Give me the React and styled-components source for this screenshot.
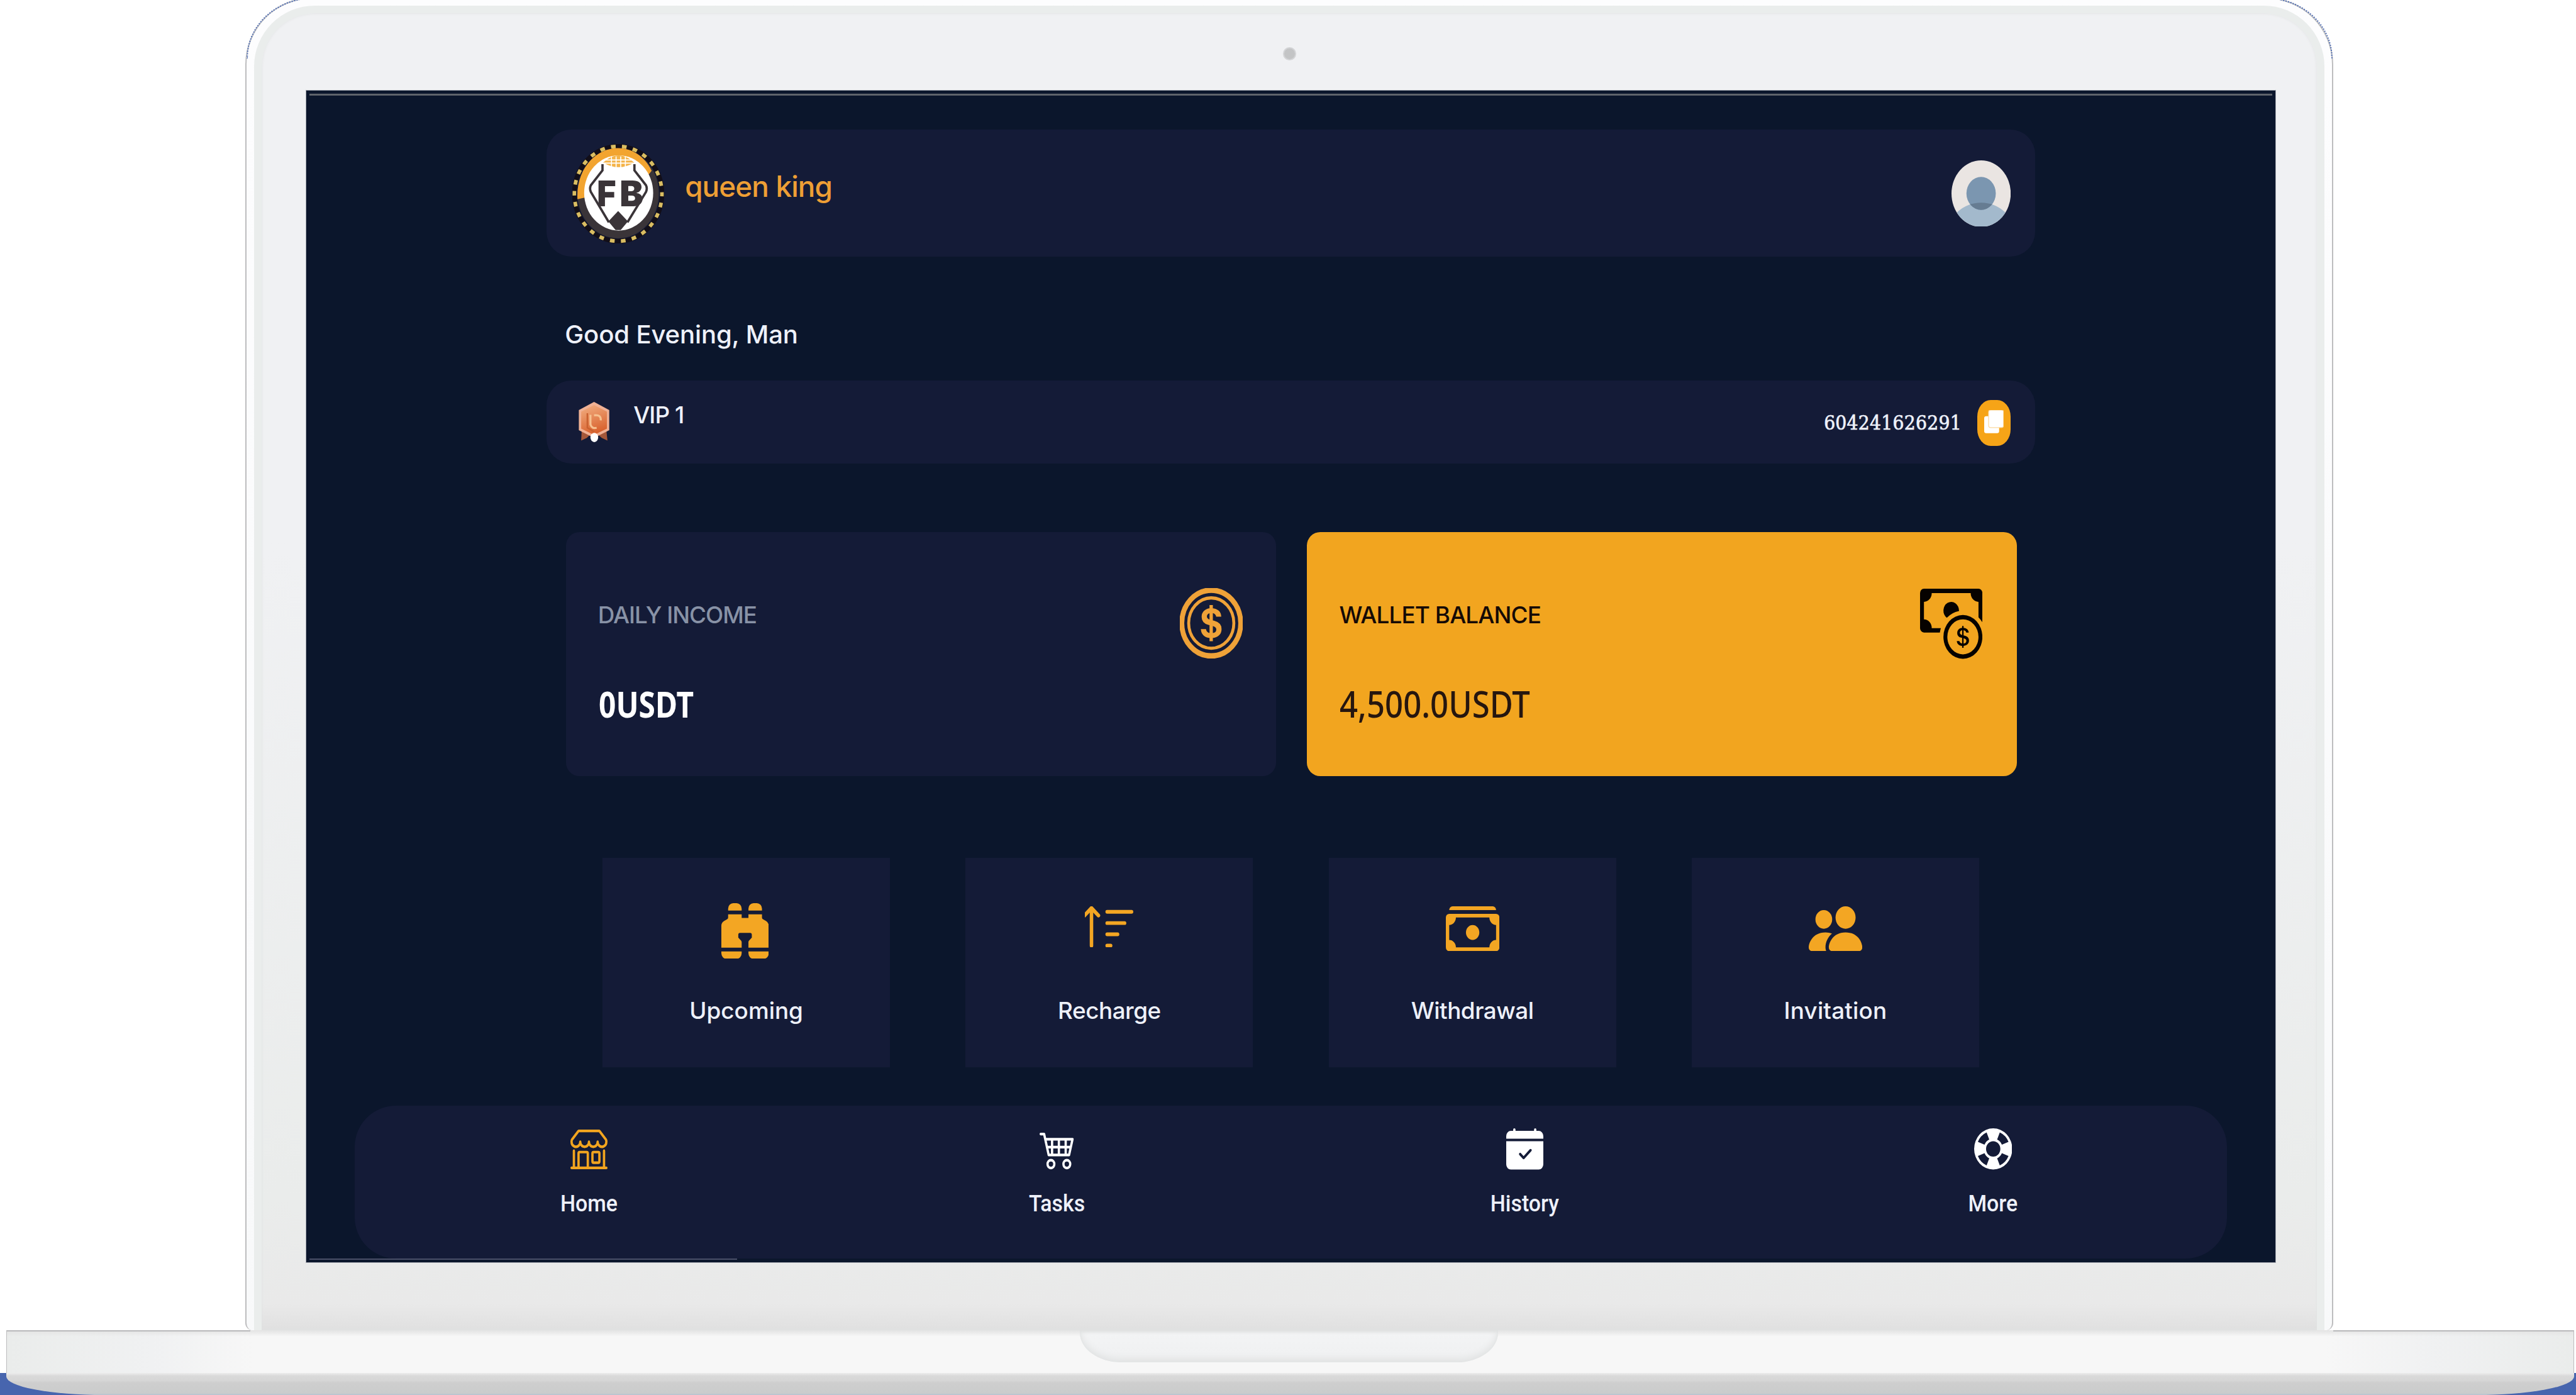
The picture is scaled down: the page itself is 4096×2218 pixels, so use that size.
import React from "react";
import styled, { createGlobalStyle } from "styled-components";
import {
  BsBinocularsFill,
  BsCalendarCheckFill,
  BsCart4,
  BsCashCoin,
  BsCashStack,
  BsCoin,
  BsLifePreserver,
  BsPeopleFill,
  BsShop,
  BsSortUp,
} from "react-icons/bs";

/* Design units to CSS pixels. */
const u = (n) => `${(n * 0.8192).toFixed(2)}px`;

const color = {
  page: "#0b162c",
  panel: "#141b37",
  accent: "#f2a51f",
  text: "#eef1fa",
};

const Global = createGlobalStyle`
  *, *::before, *::after { box-sizing: border-box; }
  body { margin: 0; background: #fff; overflow: hidden; }
`;

/* ---------- laptop ---------- */

const Stage = styled.div`
  width: 4096px;
  height: 2218px;
  overflow: hidden;
  display: flex;
  flex-direction: column;
  align-items: center;
  background: #fff;
`;

const Lid = styled.div`
  position: relative;
  flex: none;
  width: ${u(4052)};
  height: ${u(2587)};
  margin-top: ${u(-5)};
  margin-left: ${u(5)};
  padding: ${u(13)} ${u(14)} 0;
  border: ${u(2.5)} solid #bdbdbf;
  border-bottom: 0;
  border-radius: ${u(130)} ${u(130)} ${u(14)} ${u(14)};
  background: linear-gradient(#fdfdfe, #f8f9fa);

  /* Blue speckle along the rounded top corners. */
  &::before {
    content: "";
    position: absolute;
    inset: ${u(-2)} ${u(-1)} auto;
    height: ${u(118)};
    border: ${u(3)} dotted #5673b8;
    border-bottom: 0;
    border-radius: ${u(130)} ${u(130)} 0 0 / ${u(118)} ${u(118)} 0 0;
  }
`;

const Bezel = styled.div`
  height: 100%;
  padding: ${u(150)} ${u(85)} 0 ${u(85.7)};
  border: ${u(15)} solid #eaedec;
  border-bottom: 0;
  border-radius: ${u(118)} ${u(118)} 0 0;
  background: linear-gradient(#f0f1f3 0%, #f0f1f3 40%, #eaeceb 90%, #e9e9e9 98%, #e0e0e0 100%);
  box-shadow: inset 0 0 ${u(5)} #dfe1e1;
`;

const Camera = styled.div`
  width: ${u(25)};
  height: ${u(25)};
  margin: ${u(-83)} auto ${u(57.5)};
  border-radius: 50%;
  background: #c3c4c5;
  border: ${u(3)} solid #d3d4d6;
`;

const Display = styled.main`
  width: ${u(3824.5)};
  height: ${u(2277)};
  padding: ${u(7.5)} ${u(7)} 0;
  background: ${color.page};
  outline: 1px solid #a9adb5;
  outline-offset: -1px;
  display: flex;
  flex-direction: column;
`;

const TopRule = styled.div`
  flex: none;
  height: ${u(4)};
  background: #5f636b;
`;

const LoadingBar = styled.div`
  flex: none;
  width: ${u(830)};
  height: ${u(2)};
  background: #4b5069;
`;

const Base = styled.div`
  flex: none;
  width: ${u(4984)};
  height: ${u(83)};
  margin-left: ${u(9)};
  display: flex;
  justify-content: center;
  border-left: ${u(2)} solid #bcbcbe;
  border-right: ${u(2)} solid #bcbcbe;
  background:
    linear-gradient(90deg, #b9b9bb 0 ${u(473)}, transparent ${u(473)} calc(100% - ${u(466)}), #b9b9bb calc(100% - ${u(466)})) top / 100% ${u(3)} no-repeat,
    linear-gradient(#e3e3e3, rgba(247, 247, 247, 0)) top / 100% ${u(12)} no-repeat,
    linear-gradient(90deg, #eaeceb, #f0f1f2 ${u(280)}, #f7f7f7 ${u(480)}, #f7f7f7 calc(100% - ${u(480)}), #f0f1f2 calc(100% - ${u(280)}), #eaeceb);
`;

const Notch = styled.div`
  width: ${u(812)};
  height: ${u(62)};
  margin-left: ${u(-6)};
  border-radius: 0 0 ${u(80)} ${u(80)} / 0 0 ${u(58)} ${u(58)};
  background: linear-gradient(#f3f4f5, #eff0f1);
  box-shadow: inset 0 ${u(-6)} ${u(14)} #e0e2e2, inset 0 ${u(4)} ${u(5)} #dfe0e0;
`;

const Floor = styled.div`
  flex: none;
  width: 100%;
  height: ${u(42)};
  padding: 0 ${u(4)} 0 ${u(12)};
  background: #4765ae;
`;

const Foot = styled.div`
  height: 100%;
  border-radius: 0 0 ${u(190)} ${u(190)} / 0 0 ${u(36)} ${u(36)};
  background: linear-gradient(#ececec 0, #d9d9d9 14%, #d6d6d6 34%, #cecece 45%, #cbcccc 92%, #b4c3d2 100%);
`;

/* ---------- app ---------- */

const Content = styled.div`
  flex: none;
  width: ${u(2890)};
  margin: ${u(66)} auto 0;
  display: flex;
  flex-direction: column;
`;

const Bar = styled.section`
  height: ${(p) => u(p.$h)};
  margin-top: ${(p) => u(p.$top || 0)};
  padding: 0 ${u(48)} 0 ${u(50)};
  display: flex;
  align-items: flex-start;
  border-radius: ${u(48)};
  background: ${color.panel};
`;

const Spacer = styled.div`
  flex: 1;
`;

const Label = styled.span`
  display: block;
  flex: none;
  white-space: nowrap;
  font-family: Inter, "Open Sans", sans-serif;
  font-weight: 500;
  font-size: ${(p) => u(p.$size || 45)};
  line-height: 1;
  letter-spacing: ${(p) => u(p.$track || 0)};
  color: ${(p) => p.$color || color.text};
  margin: ${(p) => u(p.$top || 0)} 0 0 ${(p) => u(p.$left || 0)};
`;

const AccountNumber = styled(Label)`
  font-family: "DejaVu Serif Condensed", "DejaVu Serif", serif;
  font-weight: 400;
  -webkit-text-stroke: ${u(0.8)} ${color.text};
`;

const Amount = styled(Label)`
  font-family: "Noto Sans", "Open Sans", sans-serif;
  font-weight: ${(p) => p.$weight};
  transform: scaleX(${(p) => p.$squeeze});
  transform-origin: left;
`;

const NavLabel = styled(Label)`
  font-family: Roboto, sans-serif;
  transform: scaleX(0.92);
`;

const Icon = styled.svg`
  display: block;
  flex: none;
  width: ${(p) => u(p.$w)};
  height: ${(p) => u(p.$h)};
  color: ${(p) => p.$color || "inherit"};
  margin: ${(p) => u(p.$top || 0)} 0 0 ${(p) => u(p.$left || 0)};
`;

const CopyButton = styled.button`
  width: ${u(65)};
  height: ${u(90)};
  margin: ${u(37)} 0 0 ${u(30)};
  padding: 0;
  border: 0;
  border-radius: ${u(26)} / ${u(32)};
  background: #f6a417;
  display: flex;
  justify-content: center;
`;

const Stats = styled.section`
  margin: ${u(133)} ${u(36)} 0 ${u(38)};
  display: grid;
  grid-template-columns: 1fr 1fr;
  gap: ${u(60)};
`;

const StatCard = styled.article`
  height: ${u(474)};
  padding: 0 ${(p) => u(p.$inset)} 0 ${u(62)};
  display: flex;
  justify-content: space-between;
  align-items: flex-start;
  border-radius: ${u(26)};
  background: ${(p) => (p.$filled ? color.accent : color.panel)};
`;

const Tiles = styled.section`
  margin: ${u(158)} ${u(109)} 0;
  display: flex;
  justify-content: space-between;
`;

const Tile = styled.button`
  width: ${u(558)};
  height: ${u(406)};
  padding: ${u(88)} 0 0;
  border: 0;
  display: flex;
  flex-direction: column;
  align-items: center;
  background: ${color.panel};
`;

const IconSlot = styled.div`
  height: ${(p) => u(p.$h)};
  display: flex;
  align-items: ${(p) => p.$align || "flex-start"};
`;

const Nav = styled.nav`
  flex: none;
  width: ${u(3634)};
  height: ${u(297)};
  margin: ${u(75)} auto 0;
  padding-top: ${u(42)};
  display: grid;
  grid-template-columns: repeat(4, 1fr);
  border-radius: ${u(80)};
  background: ${color.panel};
`;

const NavItem = styled.a`
  display: flex;
  flex-direction: column;
  align-items: center;
`;

const dark = "#3a3438";

const Logo = () => (
  <Icon $w={178} $h={193} $top={27} viewBox="0 0 178 193">
    <ellipse cx="89" cy="96.5" rx="85" ry="92" fill="none" stroke="#120e18" strokeWidth="9" />
    <ellipse cx="89" cy="96.5" rx="85" ry="92" fill="none" stroke="#d9bd62" strokeWidth="7" strokeDasharray="9 12.4" strokeDashoffset="4" />
    <ellipse cx="89" cy="96" rx="79" ry="87" fill={dark} />
    <path d="M10 107C7 52 42 8 89 8C118 8 142 26 154 52L146 62L89 100L24 104Z" fill="#f2a430" />
    <ellipse cx="90" cy="95" rx="67" ry="73" fill="#fff" />
    <path d="M60 36Q90 8 120 36Q90 54 60 36Z" fill="#f4b348" />
    <path d="M62 31H118M61 37H119M76 24V45M85 24V46M94 24V46M103 24V45" stroke="#fff" strokeWidth="2" />
    <path d="M58.600 39V51L36 80Q33 86 36 93L71 152M120.600 39V51L143 80Q146 86 143 93L107 152" fill="none" stroke={dark} strokeWidth="4.500" />
    <path d="M89 130L108 150L94 167H84L70 150Z" fill={dark} />
    <text x="48" y="121" fontFamily="Inter, sans-serif" fontWeight="900" fontSize="69" fill={dark} textLength="37" lengthAdjust="spacingAndGlyphs">F</text>
    <text x="92" y="121" fontFamily="Inter, sans-serif" fontWeight="900" fontSize="69" fill={dark} textLength="46" lengthAdjust="spacingAndGlyphs">B</text>
  </Icon>
);

const Avatar = () => (
  <Icon $w={115} $h={129} $top={59} viewBox="0 0 115 129">
    <defs>
      <clipPath id="face"><ellipse cx="57.500" cy="64.500" rx="57.500" ry="64.500" /></clipPath>
      <clipPath id="head"><ellipse cx="57.500" cy="64" rx="28.500" ry="32" /></clipPath>
    </defs>
    <g clipPath="url(#face)">
      <rect width="115" height="129" fill="#eae5e2" />
      <ellipse cx="57.500" cy="142" rx="64" ry="60" fill="#a3b9cc" />
      <ellipse cx="57.500" cy="64" rx="28.500" ry="32" fill="#7b96b0" />
      <ellipse cx="57.500" cy="142" rx="64" ry="60" fill="#667c92" clipPath="url(#head)" />
    </g>
  </Icon>
);

const Badge = () => (
  <Icon $w={60} $h={78} $top={41} $left={12} viewBox="0 0 60 78">
    <defs>
      <linearGradient id="bronze" x1="0" y1="0" x2="0.3" y2="1">
        <stop offset="0" stopColor="#f3b083" />
        <stop offset="1" stopColor="#d9632f" />
      </linearGradient>
    </defs>
    <path d="M6 56L5 75L16 70L24 62ZM54 56L56 75L45 70L36 62Z" fill="#a4573a" />
    <path d="M30 0L59.500 16V55L30 70L0.500 55V16Z" fill="#f0b195" />
    <path d="M30 6L55 19V52L30 64L5 52V19Z" fill="url(#bronze)" />
    <path d="M23 25V44Q26 53 35 50M30 26Q44 24 43 36" fill="none" stroke="#f6c08f" strokeWidth="4" />
    <path d="M17 22V50L30 58" fill="none" stroke="#c9602f" strokeWidth="3" />
    <ellipse cx="30.500" cy="69" rx="7.500" ry="9" fill="#fff" />
  </Icon>
);

const CopyIcon = () => (
  <Icon $w={38} $h={46} $top={20} viewBox="0 0 38 46">
    <rect x="0" y="12" width="29" height="33" rx="4" fill="#fff" />
    <rect x="8.500" y="0" width="29" height="34" rx="4" fill="#fff" stroke="#fbd9a0" strokeWidth="1.500" />
  </Icon>
);

const tiles = [
  { label: "Upcoming", icon: BsBinocularsFill, box: "1 1 14 15", w: 92, h: 108, top: 0, left: -5 },
  { label: "Recharge", icon: BsSortUp, box: "1.1 2.05 13.9 10.95", w: 94, h: 80, top: 6, track: -0.6 },
  { label: "Withdrawal", icon: BsCashStack, box: "0 2 16 12", w: 104, h: 87, top: 6, track: -0.6 },
  { label: "Invitation", icon: BsPeopleFill, box: "0 2 16 12", w: 104, h: 87, top: 6, track: 0.2 },
];

const links = [
  { label: "Home", icon: BsShop, box: "0 1 16 15", w: 72, h: 77, fill: color.accent },
  { label: "Tasks", icon: BsCart4, box: "0 2 15.2 14", w: 67, h: 71 },
  { label: "History", icon: BsCalendarCheckFill, box: "0 0 16 16", w: 72, h: 80 },
  { label: "More", icon: BsLifePreserver, box: "0 0 16 16", w: 74, h: 80 },
];

export default function App() {
  return (
    <>
      <Global />
      <Stage>
        <Lid>
          <Bezel>
            <Camera />
            <Display>
              <TopRule />
              <Content>
                <Bar as="header" $h={246}>
                  <Logo />
                  <Label as="h1" $size={56} $track={-1.1} $top={82.5} $left={41} $color="#ee9f35">
                    queen king
                  </Label>
                  <Spacer />
                  <Avatar />
                </Bar>
                <Label as="h2" $size={49} $top={127.5} $left={36} $track={-0.2}>
                  Good Evening, Man
                </Label>
                <Bar $h={161} $top={64.5}>
                  <Badge />
                  <Label $top={45} $left={47} $track={-1.2}>VIP 1</Label>
                  <Spacer />
                  <AccountNumber $size={38.4} $top={62.5} $track={0.3}>604241626291</AccountNumber>
                  <CopyButton aria-label="Copy">
                    <CopyIcon />
                  </CopyButton>
                </Bar>
                <Stats>
                  <StatCard $inset={65}>
                    <div>
                      <Label $top={139} $track={-1.3} $color="#8892a6">DAILY INCOME</Label>
                      <Amount as="strong" $size={70} $top={115} $left={1} $weight={700} $squeeze={0.835} $color="#fff">
                        0USDT
                      </Amount>
                    </div>
                    <Icon as={BsCoin} viewBox="0 0 16 16" preserveAspectRatio="none" strokeWidth="0.25" $w={122} $h={136} $top={109} $color="#efa238" />
                  </StatCard>
                  <StatCard $filled $inset={67}>
                    <div>
                      <Label $top={139} $left={1} $track={-1.1} $color="#150a06">WALLET BALANCE</Label>
                      <Amount as="strong" $size={70} $top={115} $left={1} $weight={500} $squeeze={0.887} $color="#26160f">
                        4,500.0USDT
                      </Amount>
                    </div>
                    <Icon as={BsCashCoin} viewBox="0 0 16 16" preserveAspectRatio="none" $w={121} $h={136} $top={110} $color="#060200" />
                  </StatCard>
                </Stats>
                <Tiles>
                  {tiles.map((t) => (
                    <Tile key={t.label}>
                      <IconSlot $h={108}>
                        <Icon as={t.icon} viewBox={t.box} preserveAspectRatio="none" $w={t.w} $h={t.h} $top={t.top} $left={t.left} $color="#f3a623" />
                      </IconSlot>
                      <Label $top={79} $track={t.track}>{t.label}</Label>
                    </Tile>
                  ))}
                </Tiles>
              </Content>
              <Nav>
                {links.map((l) => (
                  <NavItem key={l.label}>
                    <IconSlot $h={82} $align="flex-end">
                      <Icon as={l.icon} viewBox={l.box} preserveAspectRatio="none" $w={l.w} $h={l.h} $color={l.fill || "#fff"} />
                    </IconSlot>
                    <NavLabel $top={45}>{l.label}</NavLabel>
                  </NavItem>
                ))}
              </Nav>
              <LoadingBar />
            </Display>
          </Bezel>
        </Lid>
        <Base>
          <Notch />
        </Base>
        <Floor>
          <Foot />
        </Floor>
      </Stage>
    </>
  );
}
